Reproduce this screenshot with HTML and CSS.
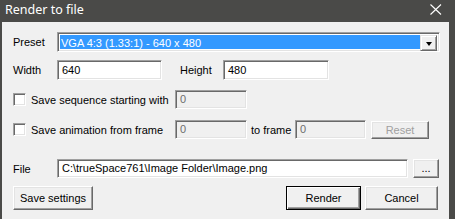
FILE: index.html
```html
<!DOCTYPE html>
<html>
<head>
<meta charset="utf-8">
<link rel="stylesheet" href="styles.css">
</head>
<body>
<div class="window">
  <div class="titlebar">
    <span class="title">Render to file</span>
    <svg class="close" width="12" height="11" viewBox="0 0 12 11"><path d="M0.5 0.5 L11 10.5 M11 0.5 L0.5 10.5" stroke="#fff" stroke-width="1.1" fill="none"/></svg>
  </div>
  <div class="client">
    <div class="row row-preset">
      <span class="lbl">Preset</span>
      <div class="combo">
        <div class="combo-sel">VGA 4:3 (1.33:1) - 640 x 480</div>
        <div class="combo-btn"><span class="tri"></span></div>
      </div>
    </div>
    <div class="row row-size">
      <span class="lbl">Width</span>
      <div class="field w-width">640</div>
      <span class="lbl lbl-height">Height</span>
      <div class="field w-height">480</div>
    </div>
    <div class="row row-seq">
      <span class="check"></span>
      <span class="clbl">Save sequence starting with</span>
      <div class="field disabled w-small">0</div>
    </div>
    <div class="row row-anim">
      <span class="check"></span>
      <span class="clbl">Save animation from frame</span>
      <div class="field disabled w-small">0</div>
      <span class="toframe">to frame</span>
      <div class="field disabled w-small2">0</div>
      <div class="btn btn-reset disabled-btn">Reset</div>
    </div>
    <div class="row row-file">
      <span class="lbl">File</span>
      <div class="field w-file">C:\trueSpace761\Image Folder\Image.png</div>
      <div class="btn btn-dots">...</div>
    </div>
    <div class="row row-buttons">
      <div class="btn btn-save">Save settings</div>
      <div class="spacer"></div>
      <div class="btn btn-render default">Render</div>
      <div class="btn btn-cancel">Cancel</div>
    </div>
  </div>
</div>
</body>
</html>
```

FILE: styles.css
```css
html, body {
  margin: 0;
  padding: 0;
  background: #4a4a48;
}
body {
  font-family: "Liberation Sans", Arial, sans-serif;
  font-size: 11px;
  color: #000;
}
.window {
  width: 455px;
  height: 219px;
  background: #4a4a48;
  display: flex;
  flex-direction: column;
  overflow: hidden;
}
.titlebar {
  height: 22px;
  display: flex;
  align-items: center;
  justify-content: space-between;
  padding: 0 13px 0 5px;
  flex: none;
}
.title {
  font-family: "Noto Sans", "Open Sans", sans-serif;
  font-size: 12.5px;
  color: #fff;
  line-height: 22px;
  margin-top: -2px;
}
.close {
  display: block;
  margin-top: -4px;
}
.client {
  margin-left: 2px;
  width: 447px;
  flex: 1;
  background: #f0f0f0;
  padding: 10px 0 0 11px;
  box-sizing: border-box;
  display: flex;
  flex-direction: column;
}
.row {
  display: flex;
  align-items: center;
}
.lbl {
  width: 44px;
  flex: none;
}
.row-preset { height: 20px; }
.row-size { height: 20px; margin-top: 8px; }
.row-seq { height: 19px; margin-top: 10px; }
.row-anim { height: 19px; margin-top: 11px; }
.row-file { height: 19px; margin-top: 20px; }
.row-buttons { height: 24px; margin-top: 8px; width: 425px; }

.combo, .field {
  box-sizing: border-box;
  border-top: 1px solid #a0a0a0;
  border-left: 1px solid #a0a0a0;
  border-right: 1px solid #fff;
  border-bottom: 1px solid #fff;
  box-shadow: inset 1px 1px 0 #696969, inset -1px -1px 0 #e3e3e3;
}
.combo {
  width: 383px;
  height: 20px;
  background: #fff;
  display: flex;
  padding: 2px;
}
.combo-sel {
  flex: 1;
  background: #3399ff;
  color: #fff;
  line-height: 16px;
  padding-left: 1px;
  white-space: nowrap;
}
.combo-btn {
  width: 17px;
  height: 16px;
  box-sizing: border-box;
  background: #f0f0f0;
  border-top: 1px solid #e3e3e3;
  border-left: 1px solid #e3e3e3;
  border-right: 1px solid #696969;
  border-bottom: 1px solid #696969;
  box-shadow: inset 1px 1px 0 #fff, inset -1px -1px 0 #a0a0a0;
  display: flex;
  align-items: center;
  justify-content: center;
}
.tri {
  width: 0;
  height: 0;
  border-left: 3.5px solid transparent;
  border-right: 3.5px solid transparent;
  border-top: 4px solid #000;
  margin-top: 1px;
}
.field {
  background: #fff;
  height: 100%;
  padding-left: 4px;
  line-height: 17px;
  white-space: nowrap;
  overflow: hidden;
}
.field.disabled {
  background: #f0f0f0;
  color: #6d6d6d;
}
.w-width { width: 105px; }
.lbl-height { margin-left: 18px; width: 43px; }
.w-height { width: 106px; }
.w-small { width: 72px; }
.w-small2 { width: 71px; }
.w-file { width: 351px; }
.row-size .field { line-height: 18px; }

.check {
  width: 13px;
  height: 13px;
  box-sizing: border-box;
  background: #fff;
  border-top: 1px solid #a0a0a0;
  border-left: 1px solid #a0a0a0;
  border-right: 1px solid #fff;
  border-bottom: 1px solid #fff;
  box-shadow: inset 1px 1px 0 #696969, inset -1px -1px 0 #e3e3e3;
  flex: none;
}
.clbl {
  margin-left: 5px;
  width: 144px;
  flex: none;
}
.toframe {
  margin-left: 4px;
  width: 44px;
  flex: none;
}
.btn {
  box-sizing: border-box;
  background: #f0f0f0;
  border-top: 1px solid #fff;
  border-left: 1px solid #fff;
  border-right: 1px solid #696969;
  border-bottom: 1px solid #696969;
  box-shadow: inset -1px -1px 0 #a0a0a0, inset 1px 1px 0 #e3e3e3;
  display: flex;
  align-items: center;
  justify-content: center;
  flex: none;
}
.btn.default {
  border: 1px solid #000;
  box-shadow: inset 1px 1px 0 #fff, inset -1px -1px 0 #696969, inset -2px -2px 0 #a0a0a0;
}
.btn-reset {
  width: 58px;
  height: 18px;
  margin-left: 5px;
  margin-top: 1px;
  color: #a0a0a0;
}
.btn-dots {
  width: 26px;
  height: 19px;
  margin-left: 5px;
  padding-bottom: 2px;
}
.btn-save {
  width: 80px;
  height: 24px;
}
.spacer { flex: 1; }
.btn-render { width: 75px; height: 24px; }
.btn-cancel { width: 73px; height: 24px; margin-left: 4px; }
```
